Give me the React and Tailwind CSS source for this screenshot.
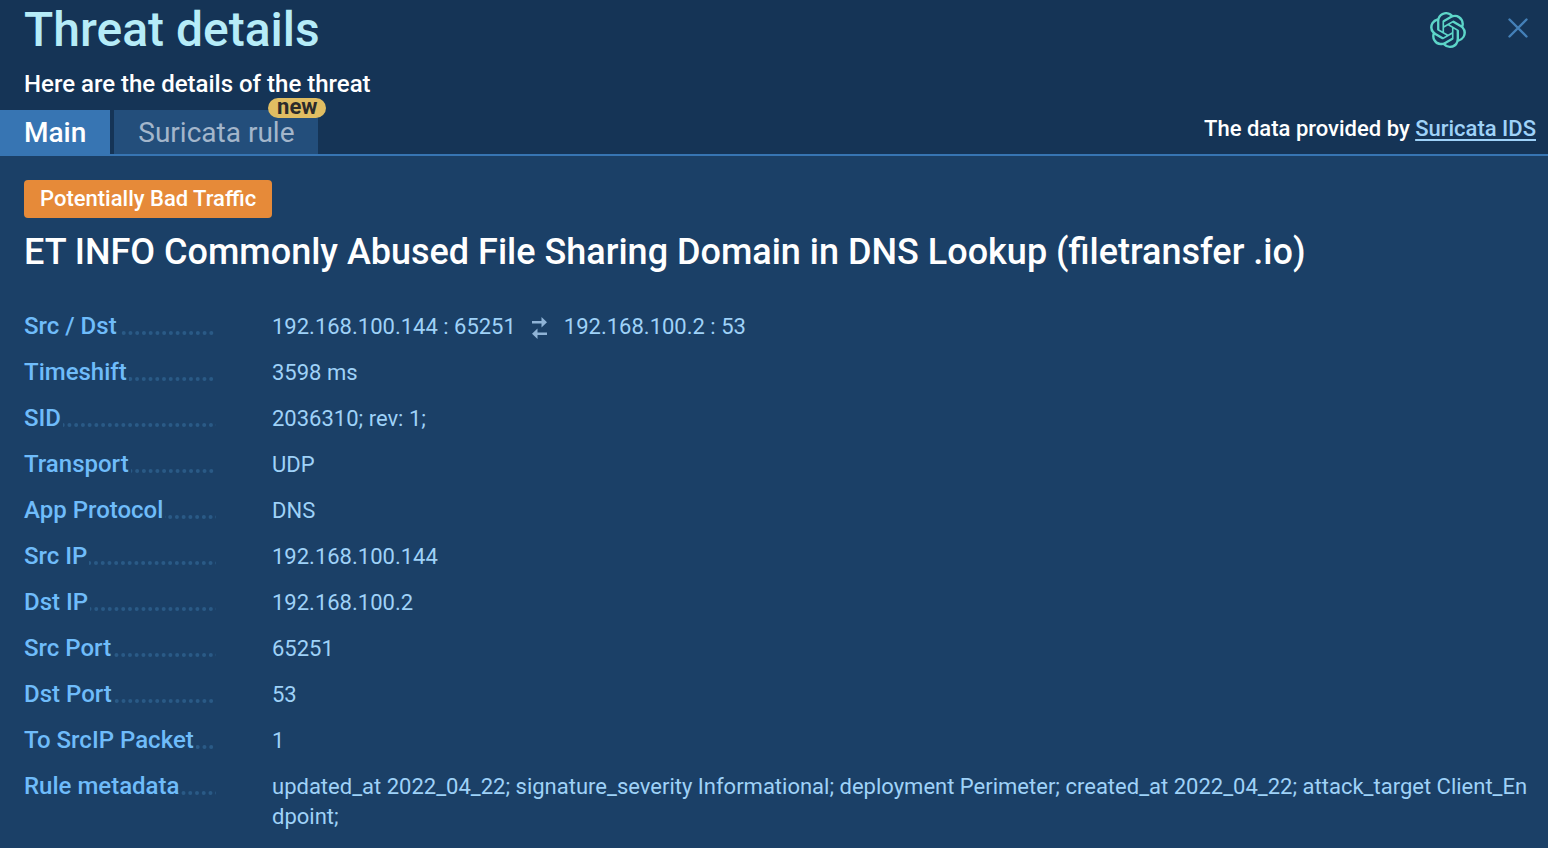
import { SiOpenai } from "react-icons/si";

function SwapIcon() {
  return (
    <svg
      viewBox="0 0 16 24"
      className="mx-4 mt-1 h-6 w-4 shrink-0 fill-[#8fb3d6]"
      aria-hidden="true"
    >
      <path d="M0 5h9.500V1l5.500 5.200-5.500 5.200V7.500H0z" />
      <path d="M15 16.500H5.500v-4L0 17.700l5.500 5.200V19H15z" />
    </svg>
  );
}

function DottedLeader() {
  return (
    <svg
      viewBox="0 0 192 4"
      preserveAspectRatio="xMaxYMid slice"
      className="mt-3.5 h-1 min-w-0 flex-1 overflow-hidden"
      aria-hidden="true"
    >
      <path
        d="M193.7 2H0"
        fill="none"
        stroke="#2a5a86"
        strokeWidth="4"
        strokeLinecap="round"
        strokeDasharray="0 6.74"
      />
    </svg>
  );
}

const rows = [
  {
    label: "Src / Dst",
    value: (
      <span className="flex">
        <span>192.168.100.144 : 65251</span>
        <SwapIcon />
        <span>192.168.100.2 : 53</span>
      </span>
    ),
  },
  { label: "Timeshift", value: "3598 ms" },
  { label: "SID", value: "2036310; rev: 1;" },
  { label: "Transport", value: "UDP" },
  { label: "App Protocol", value: "DNS" },
  { label: "Src IP", value: "192.168.100.144" },
  { label: "Dst IP", value: "192.168.100.2" },
  { label: "Src Port", value: "65251" },
  { label: "Dst Port", value: "53" },
  { label: "To SrcIP Packet", value: "1" },
  {
    label: "Rule metadata",
    value:
      "updated_at 2022_04_22; signature_severity Informational; deployment Perimeter; created_at 2022_04_22; attack_target Client_Endpoint;",
  },
];

function DetailRow({ label, value }) {
  return (
    <div className="flex items-start">
      <dt className="mr-14 flex w-48 shrink-0 items-center gap-0.5 text-2xl/[28px] font-medium whitespace-nowrap text-[#6fbcfa]">
        <span>{label}</span>
        <DottedLeader />
      </dt>
      <dd className="min-w-0 flex-1 text-[22px]/[30px] break-all text-[#9fd2f8]">{value}</dd>
    </div>
  );
}

export default function App() {
  return (
    <main className="min-h-screen bg-[#1b4067] font-['Roboto',sans-serif] text-white">
      <header className="border-b-2 border-[#3775b3] bg-[#153456]">
        <div className="flex items-start justify-between pr-5 pl-6">
          <div>
            <h1 className="text-5xl/[60px] font-medium text-[#b6ecf8]">Threat details</h1>
            <p className="mt-2 text-2xl/[32px] font-medium">Here are the details of the threat</p>
          </div>
          <div className="mt-3 flex items-center gap-[42px]">
            <button type="button" aria-label="Ask ChatGPT" className="text-[#5dd5c8]">
              <SiOpenai className="size-9" />
            </button>
            <button type="button" aria-label="Close" className="-mt-1 text-[#4480b8]">
              <svg viewBox="0 0 20 20" className="size-5" fill="none" stroke="currentColor" strokeWidth="2.4" strokeLinecap="round">
                <path d="M1.5 1.5l17 17M18.5 1.5l-17 17" />
              </svg>
            </button>
          </div>
        </div>
        <div className="mt-2.5 flex items-start justify-between pr-3">
          <div role="tablist" className="flex gap-1 text-[28px]/[42px]">
            <button type="button" role="tab" aria-selected="true" className="bg-[#3775b3] px-6 pt-0.5 font-medium">
              Main
            </button>
            <button type="button" role="tab" aria-selected="false" className="relative bg-[#234e7b] px-6 pt-0.5 text-[#a3b6cb]">
              Suricata rule
              <span className="absolute -top-3 -right-2 rounded-full bg-[#e0bd62] px-[9px] pb-0.5 text-[22px]/[18px] font-bold text-[#2b2b2b]">
                new
              </span>
            </button>
          </div>
          <p className="mt-1 text-[22px]/[30px] font-medium">
            The data provided by{" "}
            <a href="#suricata" className="text-[#9fd2f8] underline decoration-2 underline-offset-3">
              Suricata IDS
            </a>
          </p>
        </div>
      </header>
      <section className="pt-6 pr-5 pb-4 pl-6">
        <span className="inline-block rounded bg-[#e68a39] px-4 text-[22px]/[38px] font-medium">
          Potentially Bad Traffic
        </span>
        <h2 className="mt-3 text-4xl/[44px] font-medium">
          ET INFO Commonly Abused File Sharing Domain in DNS Lookup (filetransfer .io)
        </h2>
        <dl className="mt-[38px] flex flex-col gap-4">
          {rows.map((row) => (
            <DetailRow key={row.label} {...row} />
          ))}
        </dl>
      </section>
    </main>
  );
}
